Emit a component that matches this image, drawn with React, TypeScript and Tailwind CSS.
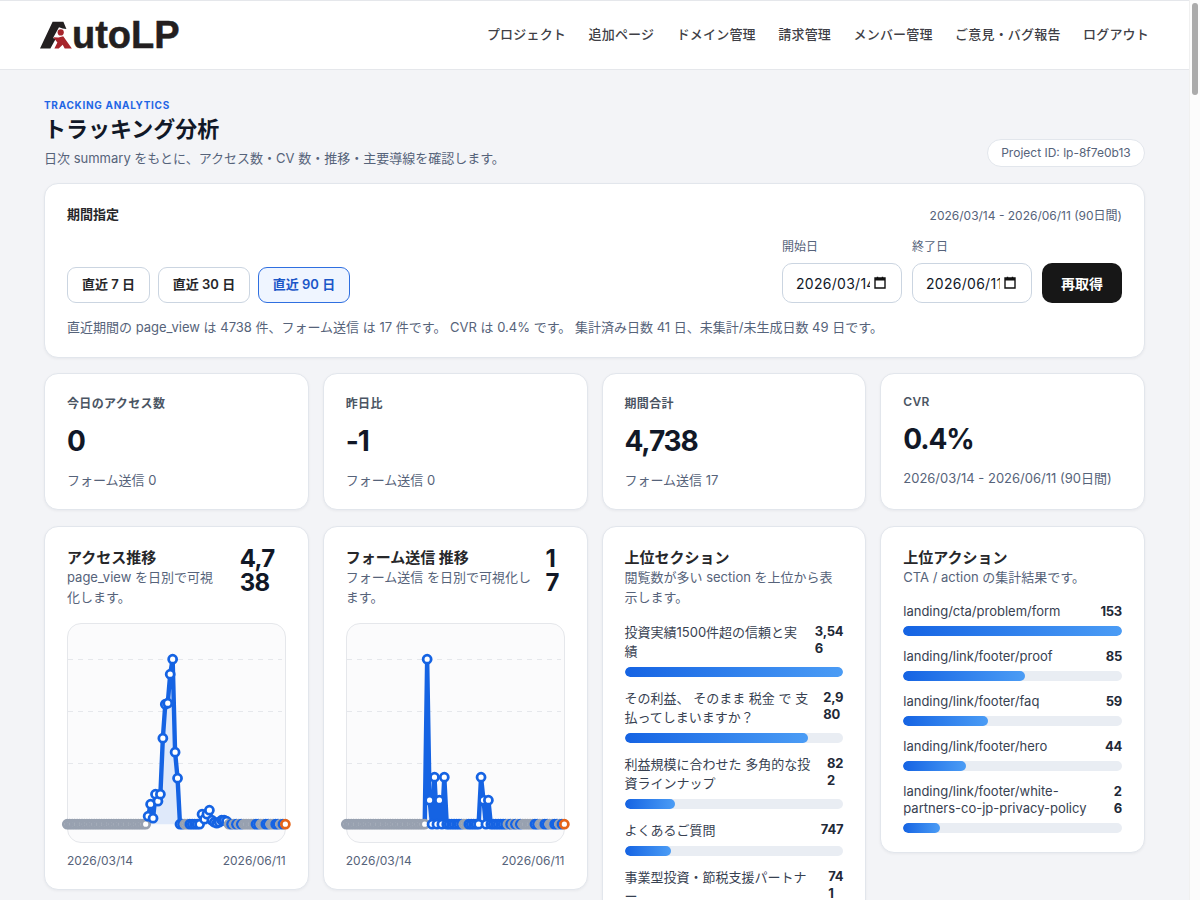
const navItems = ['プロジェクト', '追加ページ', 'ドメイン管理', '請求管理', 'メンバー管理', 'ご意見・バグ報告', 'ログアウト'];

const stats = [
  { label: '今日のアクセス数', value: '0', sub: 'フォーム送信 0', latin: false },
  { label: '昨日比', value: '-1', sub: 'フォーム送信 0', latin: false },
  { label: '期間合計', value: '4,738', sub: 'フォーム送信 17', latin: false },
  { label: 'CVR', value: '0.4%', sub: '2026/03/14 - 2026/06/11 (90日間)', latin: true },
];

const sections = [
  { label: '投資実績1500件超の信頼と実績', value: ['3,54', '6'], n: 3546 },
  { label: 'その利益、 そのまま 税金 で 支払ってしまいますか？', value: ['2,9', '80'], n: 2980 },
  { label: '利益規模に合わせた 多角的な投資ラインナップ', value: ['82', '2'], n: 822 },
  { label: 'よくあるご質問', value: ['747'], n: 747 },
  { label: '事業型投資・節税支援パートナー', value: ['74', '1'], n: 741 },
];

const actions = [
  { label: 'landing/cta/problem/form', value: ['153'], n: 153 },
  { label: 'landing/link/footer/proof', value: ['85'], n: 85 },
  { label: 'landing/link/footer/faq', value: ['59'], n: 59 },
  { label: 'landing/link/footer/hero', value: ['44'], n: 44 },
  { label: 'landing/link/footer/white-partners-co-jp-privacy-policy', value: ['2', '6'], n: 26 },
];

// days with no summary yet are drawn grey
const greyDays = new Set([48, 49, 66, 68, 70, 72, 73, 74, 75, 76, 79, 80, 83, 84, 87]);
for (let i = 0; i <= 32; i++) greyDays.add(i);

const accessHeights: Record<number, number> = {
  33: 8, 34: 20, 35: 6, 36: 30, 37: 23, 38: 30, 39: 86, 40: 120, 41: 121, 42: 150, 43: 165, 44: 72, 45: 46,
  55: 10, 56: 5, 57: 10, 58: 14, 59: 4, 60: 2, 61: 1, 62: 2, 63: 4, 64: 4, 65: 3,
};

const formHeights: Record<number, number> = {
  33: 165, 34: 24, 36: 47, 38: 24, 40: 47, 55: 47, 56: 24, 58: 24,
};

function Chart({ heights }: { heights: Record<number, number> }) {
  const base = 200.2;
  const points = Array.from({ length: 90 }, (_, i) => ({
    i,
    x: -0.7 + i * 2.45,
    y: base - (heights[i] ?? 0),
  }));
  const line = points.map(p => `${p.x},${p.y}`).join(' ');

  return (
    <div className="h-[220px] rounded-[14px] border border-[#e5e7eb] bg-[#fbfbfc]">
      <svg width="218" height="218" viewBox="0 0 218 218" className="block overflow-visible">
        {[35.5, 87.5, 139.5].map(y => (
          <line key={y} x1="0" x2="214" y1={y} y2={y} stroke="#e5e7eb" strokeWidth="1" strokeDasharray="5 5" />
        ))}
        <polygon points={`${line} 217.35,${base} -0.7,${base}`} fill="#dfe9fa" />
        <polyline points={line} fill="none" stroke="#1563e3" strokeWidth="4.4" strokeLinejoin="round" />
        {points.map(p => (
          <circle
            key={p.i}
            cx={p.x}
            cy={p.y}
            r="4"
            fill="#ffffff"
            strokeWidth="2.8"
            stroke={p.i === 89 ? '#e5651a' : greyDays.has(p.i) ? '#98a1b0' : '#1563e3'}
          />
        ))}
      </svg>
    </div>
  );
}

function ChartCard({ title, desc, total, totalWidth, heights }: { title: string; desc: string; total: string[]; totalWidth: string; heights: Record<number, number> }) {
  return (
    <div className="rounded-[14px] border border-[#e2e6ec] bg-white px-[22px] pt-[22px] pb-[20px] shadow-[0_1px_3px_rgba(15,23,42,0.05)] self-start">
      <div className="flex justify-between gap-2 mb-[16px]">
        <div className="flex-1 min-w-0">
          <h3 className="text-[15px] leading-[18px] font-bold text-[#27272a]">{title}</h3>
          <p className="text-[13px] leading-[20px] text-[#56637a]">{desc}</p>
        </div>
        <div className={`shrink-0 -mt-[2px] text-[24px] leading-[24px] font-bold text-[#111827] tracking-[-0.03em] ${totalWidth}`}>
          {total.map(t => <div key={t}>{t}</div>)}
        </div>
      </div>
      <Chart heights={heights} />
      <div className="flex justify-between mt-[10px] text-[12px] leading-[16px] text-[#56637a]">
        <span>2026/03/14</span>
        <span>2026/06/11</span>
      </div>
    </div>
  );
}

function RankCard({ title, desc, rows, labelLeading }: { title: string; desc: string; rows: { label: string; value: string[]; n: number }[]; labelLeading: string }) {
  const max = rows[0].n;
  return (
    <div className="rounded-[14px] border border-[#e2e6ec] bg-white px-[22px] pt-[22px] pb-[19px] shadow-[0_1px_3px_rgba(15,23,42,0.05)] self-start">
      <h3 className="text-[15px] leading-[18px] font-bold text-[#27272a]">{title}</h3>
      <p className="text-[13px] leading-[20px] text-[#56637a]">{desc}</p>
      <div className="mt-[15.5px] flex flex-col gap-[12px]">
        {rows.map(row => (
          <div key={row.label}>
            <div className="flex justify-between gap-3 mb-[6px]">
              <span className={`flex-1 min-w-0 text-[13px] text-[#374151] break-words ${labelLeading}`}>{row.label}</span>
              <span className="shrink-0 text-[13px] leading-[17px] font-bold text-[#1f2937] tracking-[-0.02em]">
                {row.value.map(v => <div key={v}>{v}</div>)}
              </span>
            </div>
            <div className="h-[10px] rounded-full bg-[#e9edf3] overflow-hidden">
              <div
                className="h-full rounded-full bg-gradient-to-r from-[#1563e3] to-[#4b9cf5]"
                style={{ width: `${(row.n / max) * 100}%` }}
              />
            </div>
          </div>
        ))}
      </div>
    </div>
  );
}

function DateField({ value }: { value: string }) {
  return (
    <div className="flex items-center h-10 w-[120px] rounded-[10px] border border-[#cbd5e1] bg-white pl-[13px] pr-[14px] overflow-hidden">
      <span className="w-[74px] shrink-0 overflow-hidden whitespace-nowrap text-[14px] text-[#111827] tracking-[0.02em]">{value}</span>
      <svg width="14" height="14" viewBox="0 0 14 14" className="shrink-0 ml-auto">
        <path d="M2 2h10v10H2z" fill="none" stroke="#111" strokeWidth="1.4" />
        <path d="M2 2h10v2.6H2zM3.8 .8h1.4v2H3.8zM8.8 .8h1.4v2H8.8z" fill="#111" />
      </svg>
    </div>
  );
}

export default function App() {
  return (
    <div className="relative min-h-[8500px] bg-[#f3f4f7] font-['Inter','Noto_Sans_CJK_JP',sans-serif] pr-[11px]">
      <header className="h-[70px] flex items-center justify-between bg-white border-y border-[#e5e7eb] pl-10 pr-10">
        <div className="flex items-start h-[28px] w-[140px]">
          <svg width="33" height="28" viewBox="40 21 33 28" className="shrink-0">
            <path d="M40 48.4 52.6 21.7h10.8l3 7.4-3.8-.6-3.6-1.2-6 10.7 2.6 1-5.2 9.4z" fill="#231f20" />
            <circle cx="60.7" cy="32.4" r="3.1" fill="#a6242b" />
            <path d="M53.2 37.2l5.2.4 4.8-1.4 8.7 12.2h-7.2l-2-3.6-4 3.6h-4.3l3-5.8z" fill="#a6242b" />
          </svg>
          <span className="font-['Liberation_Sans',sans-serif] text-[38px] leading-[28px] font-bold text-[#231f20] [-webkit-text-stroke:0.5px_#231f20] -ml-[1px]">utoLP</span>
        </div>
        <nav className="flex gap-[22.5px]">
          {navItems.map(item => (
            <a key={item} className="text-[13px] font-medium text-[#3f3f46] tracking-[0.014em] whitespace-nowrap">{item}</a>
          ))}
        </nav>
      </header>

      <main className="px-[44px] pt-[29px]">
        <div className="flex items-end justify-between mb-[15px]">
          <div>
            <p className="text-[10px] leading-[12px] font-bold tracking-[0.07em] text-[#1f66e5]">TRACKING ANALYTICS</p>
            <h1 className="text-[22px] leading-[30px] font-bold text-[#111827] mt-[3px]">トラッキング分析</h1>
            <p className="text-[13px] leading-[20px] text-[#56637a] mt-[4px]">日次 summary をもとに、アクセス数・CV 数・推移・主要導線を確認します。</p>
          </div>
          <span className="h-[28px] w-[158px] mb-[1px] flex items-center justify-center rounded-full border border-[#e2e6ec] bg-white text-[12px] text-[#56637a]">Project ID: lp-8f7e0b13</span>
        </div>

        <section className="rounded-[14px] border border-[#e2e6ec] bg-white px-[22px] pt-[22px] pb-[20px] shadow-[0_1px_3px_rgba(15,23,42,0.05)]">
          <div className="flex justify-between items-center">
            <h2 className="text-[13px] leading-[16px] font-bold text-[#27272a] pb-[4px]">期間指定</h2>
            <span className="text-[12px] text-[#56637a]">2026/03/14 - 2026/06/11 (90日間)</span>
          </div>
          <div className="flex items-end justify-between mt-[13px]">
            <div className="flex gap-2">
              <button className="h-9 w-[83px] rounded-[9px] border border-[#cbd5e1] bg-white text-[13px] font-semibold text-[#27272a]">直近 7 日</button>
              <button className="h-9 w-[92px] rounded-[9px] border border-[#cbd5e1] bg-white text-[13px] font-semibold text-[#27272a]">直近 30 日</button>
              <button className="h-9 w-[92px] rounded-[9px] border border-[#2f6fe0] bg-[#eff5ff] text-[13px] font-semibold text-[#1b57c8]">直近 90 日</button>
            </div>
            <div className="flex items-end gap-[10px]">
              <label className="block">
                <span className="block text-[12px] leading-[16px] text-[#56637a] mb-[8px]">開始日</span>
                <DateField value="2026/03/14" />
              </label>
              <label className="block">
                <span className="block text-[12px] leading-[16px] text-[#56637a] mb-[8px]">終了日</span>
                <DateField value="2026/06/11" />
              </label>
              <button className="h-10 w-20 rounded-[10px] bg-[#171717] text-[14px] font-bold text-white">再取得</button>
            </div>
          </div>
          <p className="text-[13px] leading-[20px] text-[#56637a] mt-[14px]">直近期間の page_view は 4738 件、フォーム送信 は 17 件です。 CVR は 0.4% です。 集計済み日数 41 日、未集計/未生成日数 49 日です。</p>
        </section>

        <div className="grid grid-cols-4 gap-[14px] mt-[15px]">
          {stats.map(stat => (
            <div key={stat.label} className="rounded-[14px] border border-[#e2e6ec] bg-white px-[22px] pt-[21px] pb-[19px] shadow-[0_1px_3px_rgba(15,23,42,0.05)]">
              <p className={`text-[12px] leading-[18px] font-semibold text-[#4b5563] tracking-[0.03em] ${stat.latin ? '-mt-[2px]' : ''}`}>{stat.label}</p>
              <p className="text-[28px] leading-[36px] font-bold text-[#111827] tracking-[-0.04em] mt-[10px]">{stat.value}</p>
              <p className="text-[13px] leading-[20px] text-[#56637a] mt-[11px]">{stat.sub}</p>
            </div>
          ))}
        </div>

        <div className="grid grid-cols-4 gap-[14px] mt-[16px]">
          <ChartCard title="アクセス推移" desc="page_view を日別で可視化します。" total={['4,7', '38']} totalWidth="w-[52px] pl-[6px]" heights={accessHeights} />
          <ChartCard title="フォーム送信 推移" desc="フォーム送信 を日別で可視化します。" total={['1', '7']} totalWidth="w-[19px]" heights={formHeights} />
          <RankCard title="上位セクション" desc="閲覧数が多い section を上位から表示します。" rows={sections} labelLeading="leading-[19px]" />
          <RankCard title="上位アクション" desc="CTA / action の集計結果です。" rows={actions} labelLeading="leading-[17px]" />
        </div>
      </main>

      <div className="fixed top-0 right-0 bottom-0 w-[11px] bg-[#fcfcfc] border-l border-[#f0f0f0]">
        <div className="absolute top-[3px] left-[2px] w-[6px] h-[92px] rounded-full bg-[#ababab]" />
      </div>
    </div>
  );
}
